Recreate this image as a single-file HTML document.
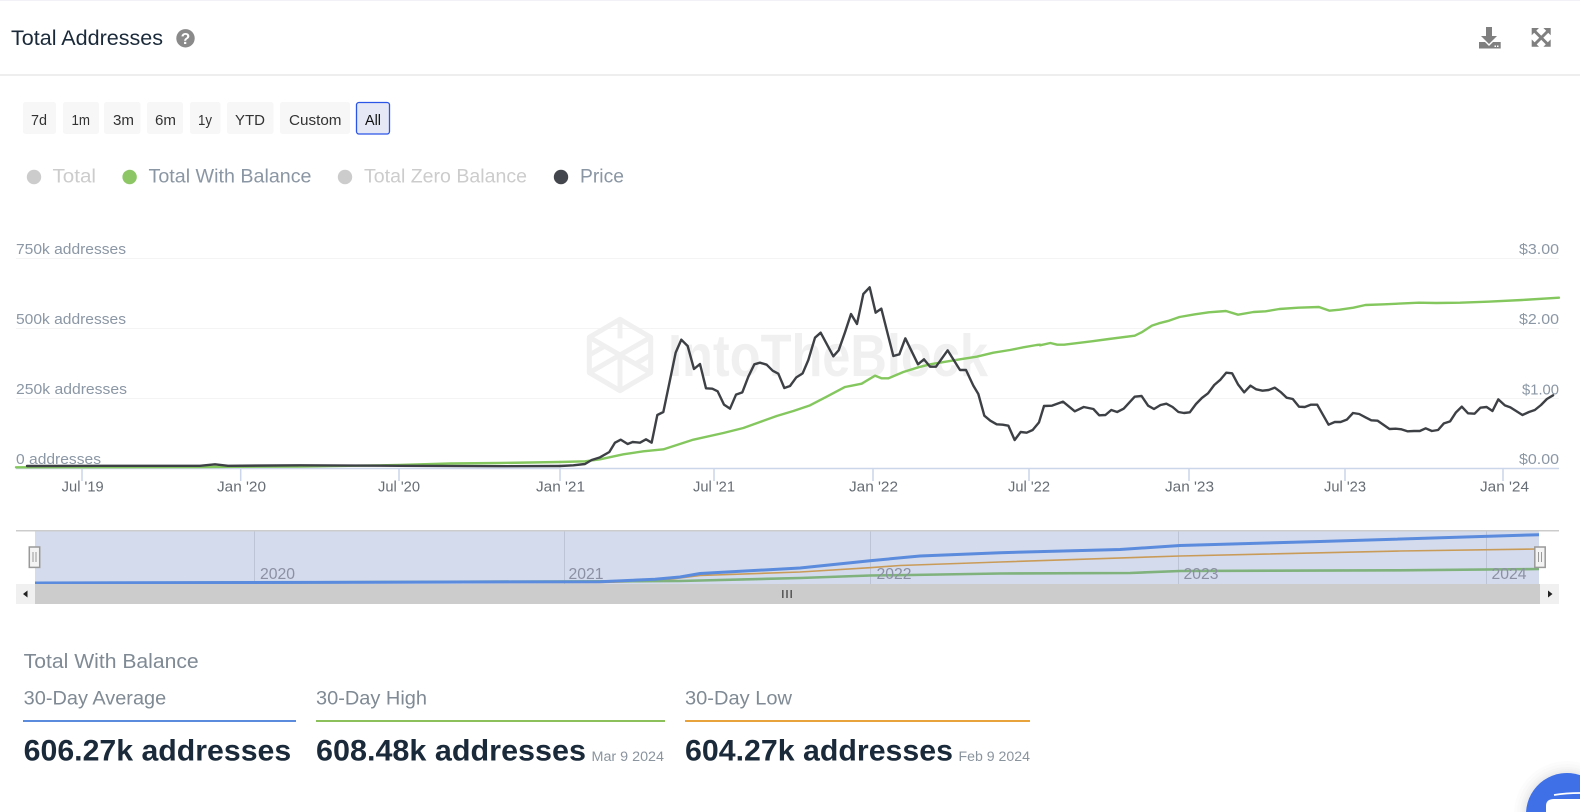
<!DOCTYPE html>
<html lang="en">
<head>
<meta charset="utf-8">
<title>Total Addresses</title>
<style>
html,body{margin:0;padding:0;background:#fff;width:1580px;height:812px;overflow:hidden}
svg{display:block}
text{font-family:"Liberation Sans",sans-serif}
.l{font-size:15px;fill:#8b97a5}
.x{font-size:14.5px;fill:#666d75}
.b{font-size:14.5px;fill:#333;text-anchor:start}
.y{font-size:16px;fill:#8c90a3}
.v{font-size:30px;font-weight:bold;fill:#1b2a3a}
.h{font-size:19px;fill:#7f8a94}
.d{font-size:13.500px;fill:#8a949e}
.ln{fill:none;vector-effect:non-scaling-stroke;stroke-linejoin:round;stroke-linecap:round}
</style>
</head>
<body>
<svg width="1580" height="812" viewBox="0 0 1580 812" xmlns="http://www.w3.org/2000/svg">
<rect width="1580" height="812" fill="#fff"/>
<rect width="1580" height="1" fill="#f1f1f7"/>
<rect y="74" width="1580" height="2" fill="#eeeeee"/>

<!-- Header -->
<text x="11" y="45" font-size="21" fill="#1b2a3a" textLength="152" lengthAdjust="spacingAndGlyphs">Total Addresses</text>
<circle cx="185.500" cy="38.300" r="9.200" fill="#8a8a8a"/>
<text x="185.500" y="44" font-size="15.500" font-weight="bold" fill="#fff" text-anchor="middle">?</text>

<!-- Download icon -->
<path fill="#7f7f7f" d="M1486 27h6v9h5l-8 8-8-8h5z"/>
<path fill="#7f7f7f" d="M1479 42h6l4 4 4-4h7.700v6.500H1479z"/>
<rect x="1494.500" y="45.500" width="1.500" height="1.500" fill="#fff"/>
<rect x="1497" y="45.500" width="1.500" height="1.500" fill="#fff"/>

<!-- Expand icon -->
<path fill="none" stroke="#7f7f7f" stroke-width="3" d="M1535 31.500l12.500 12.500M1547.500 31.500L1535 44"/>
<path fill="#7f7f7f" d="M1531.700 28h7.300l-7.300 7.300zM1550.700 28h-7.300l7.300 7.300zM1531.700 46.700h7.300l-7.300-7.300zM1550.700 46.700h-7.300l7.300-7.300z"/>

<!-- Range buttons -->
<g fill="#f7f7f7">
<rect x="23" y="102" width="33" height="32" rx="2.500"/>
<rect x="63" y="102" width="36" height="32" rx="2.500"/>
<rect x="104" y="102" width="36.500" height="32" rx="2.500"/>
<rect x="147" y="102" width="36" height="32" rx="2.500"/>
<rect x="190" y="102" width="30.500" height="32" rx="2.500"/>
<rect x="227" y="102" width="46.500" height="32" rx="2.500"/>
<rect x="280" y="102" width="70" height="32" rx="2.500"/>
</g>
<rect x="356.500" y="102.500" width="33" height="31.500" rx="2.500" fill="#e6e9f5" stroke="#2b55e6" stroke-width="1.300"/>
<text class="b" x="31" y="125" textLength="16" lengthAdjust="spacingAndGlyphs">7d</text>
<text class="b" x="71.500" y="125" textLength="18.500" lengthAdjust="spacingAndGlyphs">1m</text>
<text class="b" x="113" y="125" textLength="21" lengthAdjust="spacingAndGlyphs">3m</text>
<text class="b" x="155" y="125" textLength="21" lengthAdjust="spacingAndGlyphs">6m</text>
<text class="b" x="198" y="125" textLength="14" lengthAdjust="spacingAndGlyphs">1y</text>
<text class="b" x="235" y="125" textLength="30" lengthAdjust="spacingAndGlyphs">YTD</text>
<text class="b" x="289" y="125" textLength="52.500" lengthAdjust="spacingAndGlyphs">Custom</text>
<text class="b" x="365" y="125" textLength="16" lengthAdjust="spacingAndGlyphs" style="fill:#111">All</text>

<!-- Legend -->
<circle cx="34" cy="177" r="7.200" fill="#cccccc"/>
<text x="52.500" y="182.300" font-size="19.500" fill="#cccccc" textLength="43.500" lengthAdjust="spacingAndGlyphs">Total</text>
<circle cx="129.600" cy="177" r="7.200" fill="#8cc665"/>
<text x="148.500" y="182.300" font-size="19.500" fill="#8a96a3" textLength="163" lengthAdjust="spacingAndGlyphs">Total With Balance</text>
<circle cx="345" cy="177" r="7.200" fill="#cccccc"/>
<text x="364" y="182.300" font-size="19.500" fill="#cccccc" textLength="163" lengthAdjust="spacingAndGlyphs">Total Zero Balance</text>
<circle cx="561" cy="177" r="7.200" fill="#43464d"/>
<text x="580" y="182.300" font-size="19.500" fill="#8a96a3" textLength="44" lengthAdjust="spacingAndGlyphs">Price</text>

<!-- Grid -->
<g stroke="#f4f4f4" stroke-width="1">
<path d="M16 258.500H1559M16 328.500H1559M16 398.500H1559"/>
</g>

<!-- Watermark -->
<g transform="translate(560 270) scale(.33333)" fill="none" stroke="#f0f0f0" stroke-width="15" stroke-linejoin="round">
<path d="M180 148L272 202V308L180 362L88 308V202Z"/>
<path d="M88 202L272 308M272 202L180 255V362M88 308L180 255M180 148V205M88 255L135 228M272 255L226 282"/>
</g>
<text x="668" y="376" font-size="59" font-weight="bold" fill="#f0f0f0" textLength="320" lengthAdjust="spacingAndGlyphs">IntoTheBlock</text>

<!-- Y labels -->
<text class="l" x="16" y="254" textLength="110" lengthAdjust="spacingAndGlyphs">750k addresses</text>
<text class="l" x="16" y="324" textLength="110" lengthAdjust="spacingAndGlyphs">500k addresses</text>
<text class="l" x="16" y="394" textLength="111" lengthAdjust="spacingAndGlyphs">250k addresses</text>
<text class="l" x="16" y="464" textLength="85" lengthAdjust="spacingAndGlyphs">0 addresses</text>
<text class="l" x="1519" y="254" textLength="40" lengthAdjust="spacingAndGlyphs">$3.00</text>
<text class="l" x="1519" y="324" textLength="40" lengthAdjust="spacingAndGlyphs">$2.00</text>
<text class="l" x="1522" y="394.500" textLength="37" lengthAdjust="spacingAndGlyphs">$1.00</text>
<text class="l" x="1519" y="464" textLength="40" lengthAdjust="spacingAndGlyphs">$0.00</text>

<!-- Axis -->
<path stroke="#ccd6eb" stroke-width="1.500" fill="none" d="M16 468.500H1559M82 468v13M240.700 468v13M399 468v13M560 468v13M714 468v13M873 468v13M1029 468v13M1189 468v13M1345 468v13M1503 468v13"/>
<text class="x" x="61.700" y="491.500" textLength="42" lengthAdjust="spacingAndGlyphs">Jul '19</text>
<text class="x" x="217" y="491.500" textLength="49" lengthAdjust="spacingAndGlyphs">Jan '20</text>
<text class="x" x="378" y="491.500" textLength="42" lengthAdjust="spacingAndGlyphs">Jul '20</text>
<text class="x" x="536" y="491.500" textLength="49" lengthAdjust="spacingAndGlyphs">Jan '21</text>
<text class="x" x="693" y="491.500" textLength="42" lengthAdjust="spacingAndGlyphs">Jul '21</text>
<text class="x" x="849" y="491.500" textLength="49" lengthAdjust="spacingAndGlyphs">Jan '22</text>
<text class="x" x="1008" y="491.500" textLength="42" lengthAdjust="spacingAndGlyphs">Jul '22</text>
<text class="x" x="1165" y="491.500" textLength="49" lengthAdjust="spacingAndGlyphs">Jan '23</text>
<text class="x" x="1324" y="491.500" textLength="42" lengthAdjust="spacingAndGlyphs">Jul '23</text>
<text class="x" x="1480" y="491.500" textLength="49" lengthAdjust="spacingAndGlyphs">Jan '24</text>

<!-- Green series -->
<g stroke="#84c75e" stroke-width="2.400">
<path class="ln" d="M16 467.300L200 467L300 466.500L400 465L450 463.500L500 463L560 462"/>
<path class="ln" transform="translate(560 270) scale(.33333)" d="M0 576L75 574L120 568L190 553L250 544L310 538L400 509L490 489L550 474L600 456L650 438L700 423L750 406L800 380L855 351L875 347L905 341L945 317L965 325L985 325L1030 306L1075 292L1110 283L1200 268L1250 260L1300 248L1350 240L1390 232L1430 225L1440 224"/>
<path class="ln" transform="translate(1040 270) scale(.34435 .33333)" d="M0 226L30 219L50 224L70 224L150 214L200 207L275 197L295 187L325 167L345 160L375 152L405 141L450 133L490 127L540 123L575 134L620 126L655 124L695 117L750 113L810 111L840 122L870 119L910 113L945 105L1000 103L1100 98L1150 99L1220 98L1300 95L1400 90L1507 83"/>
</g>

<!-- Price series -->
<g stroke="#3d4045" stroke-width="2.400">
<path class="ln" d="M27 466L100 465.800L200 465.800L215 464.300L228 465.800L300 465.300L400 465.800L500 466.200L560 466"/>
<path class="ln" transform="translate(560 270) scale(.33333)" d="M0 588L40 586L75 582L95 570L120 562L148 546L165 518L182 509L203 522L218 516L240 518L258 508L275 518L292 435L310 426L330 330L347 248L364 209L383 228L402 297L420 282L438 355L457 356L473 364L492 404L510 416L528 374L547 367L565 320L583 283L600 278L620 284L638 302L655 311L673 354L690 348L709 322L728 310L745 270L765 203L782 188L820 259L836 241L855 187L873 132L891 162L910 72L929 52L947 128L964 116L1000 258L1018 253L1036 205L1074 283L1092 268L1110 290L1128 290L1163 241L1200 300L1218 300L1240 347L1255 372L1273 437L1291 452L1310 463L1328 464L1345 467L1364 510L1382 486L1400 488L1418 480L1437 457L1452 408"/>
<path class="ln" transform="translate(1040 270) scale(.34435 .33333)" d="M12 408L35 407L67 395L101 424L127 411L155 417L172 436L190 435L207 420L224 426L243 416L275 380L295 378L314 407L331 417L350 405L367 401L385 411L402 426L418 429L435 427L453 402L470 384L488 370L506 345L524 329L541 308L558 310L575 343L593 367L611 347L628 358L646 362L664 360L682 353L700 367L716 383L734 387L752 410L769 411L787 404L805 404L838 464L856 456L873 456L891 449L909 429L927 432L945 442L962 451L980 452L1015 477L1033 476L1050 478L1068 484L1086 483L1103 483L1120 475L1138 483L1156 480L1173 460L1191 454L1208 427L1225 410L1243 430L1262 431L1279 413L1297 411L1314 423L1331 388L1350 406L1366 412L1401 435L1420 426L1437 420L1455 405L1472 387L1490 376"/>
</g>

<!-- Navigator -->
<rect x="16" y="530" width="1543" height="1.500" fill="#cccccc"/>
<rect x="35" y="531.500" width="1504" height="52.500" fill="#d4dbec"/>
<path stroke="#bcc4d6" stroke-width="1" d="M254.500 531.500V584M564.500 531.500V584M870.500 531.500V584M1178.500 531.500V584M1486.500 531.500V584"/>
<path fill="none" stroke="#c99b58" stroke-width="1.600" d="M35 583L600 582.500L655 581L680 578L700 575.500L800 572L870 567.700L900 565.500L1000 562L1180 556L1400 551L1539 549"/>
<path fill="none" stroke="#7fb27c" stroke-width="2.600" d="M35 583.300L680 581L800 578L870 575.500L910 575L1000 573.500L1130 573L1180 571L1400 570.300L1539 569"/>
<path fill="none" stroke="#5b8bdc" stroke-width="3" d="M35 583L600 581.700L655 579.300L680 577L700 573.500L800 568L870 560.700L920 556L1000 552.700L1120 549.500L1180 545.500L1320 541.500L1539 534.700"/>
<g>
<text class="y" x="260" y="579" textLength="35" lengthAdjust="spacingAndGlyphs">2020</text>
<text class="y" x="568.500" y="579" textLength="35" lengthAdjust="spacingAndGlyphs">2021</text>
<text class="y" x="876.500" y="579" textLength="35" lengthAdjust="spacingAndGlyphs">2022</text>
<text class="y" x="1183.500" y="579" textLength="35" lengthAdjust="spacingAndGlyphs">2023</text>
<text class="y" x="1491.500" y="579" textLength="35" lengthAdjust="spacingAndGlyphs">2024</text>
</g>
<rect x="29.300" y="547" width="10.400" height="20.400" fill="#f4f4f4" stroke="#999" stroke-width="1.500"/>
<path stroke="#999" stroke-width="1" d="M33 552v10M36 552v10"/>
<rect x="1534.800" y="547" width="10.400" height="20.400" fill="#f4f4f4" stroke="#999" stroke-width="1.500"/>
<path stroke="#999" stroke-width="1" d="M1538.500 552v10M1541.500 552v10"/>

<!-- Scrollbar -->
<rect x="16" y="584" width="1543" height="20" fill="#cccccc"/>
<rect x="16" y="584" width="19" height="20" fill="#f0f0f0"/>
<rect x="1540" y="584" width="19" height="20" fill="#f0f0f0"/>
<path fill="#222" d="M23 594l4.500-3.500v7zM1552.500 594l-4.500-3.500v7z"/>
<path stroke="#555" stroke-width="1.500" d="M782.800 590v8M787 590v8M791.200 590v8"/>

<!-- Stats -->
<text x="23.700" y="668" font-size="20" fill="#7f8a94" textLength="175" lengthAdjust="spacingAndGlyphs">Total With Balance</text>
<text class="h" x="23.700" y="704.500" textLength="142.500" lengthAdjust="spacingAndGlyphs">30-Day Average</text>
<text class="h" x="316" y="704.500" textLength="111" lengthAdjust="spacingAndGlyphs">30-Day High</text>
<text class="h" x="685" y="704.500" textLength="107" lengthAdjust="spacingAndGlyphs">30-Day Low</text>
<rect x="23" y="720" width="273" height="2" fill="#5b8bdc"/>
<rect x="316" y="720" width="349" height="2" fill="#8bc05a"/>
<rect x="685" y="720" width="345" height="2" fill="#e8a33d"/>
<text class="v" x="23.700" y="760.500" textLength="267.500" lengthAdjust="spacingAndGlyphs">606.27k addresses</text>
<text class="v" x="316" y="760.500" textLength="270" lengthAdjust="spacingAndGlyphs">608.48k addresses</text>
<text class="d" x="591.500" y="761" textLength="72.500" lengthAdjust="spacingAndGlyphs">Mar 9 2024</text>
<text class="v" x="685" y="760.500" textLength="268" lengthAdjust="spacingAndGlyphs">604.27k addresses</text>
<text class="d" x="958.500" y="761" textLength="71.500" lengthAdjust="spacingAndGlyphs">Feb 9 2024</text>

<!-- Chat bubble, clipped to the frame -->
<path fill="#000" opacity=".012" d="M1514 812A53 53 0 0 1 1580 762.600V812Z"/>
<path fill="#000" opacity=".012" d="M1517 812A50 50 0 0 1 1580 765.700V812Z"/>
<path fill="#000" opacity=".014" d="M1520 812A47 47 0 0 1 1580 768.800V812Z"/>
<path fill="#000" opacity=".016" d="M1522 812A45 45 0 0 1 1580 771V812Z"/>
<path fill="#000" opacity=".02" d="M1524 812A43 43 0 0 1 1580 773V812Z"/>
<path fill="#3f70e8" d="M1526.050 812A41 41 0 0 1 1580 775.100V812Z"/>
<path fill="none" stroke="#fff" stroke-width="1.800" d="M1554 795Q1566 793 1580 793"/>
<path fill="#fff" d="M1546 812V806Q1546 799 1554 799H1580V812Z"/>
</svg>
</body>
</html>
